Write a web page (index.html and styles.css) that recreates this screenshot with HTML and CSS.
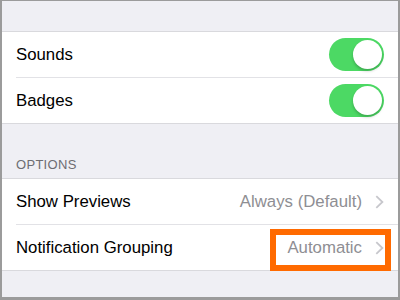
FILE: index.html
```html
<!DOCTYPE html>
<html lang="en">
<head>
    <meta charset="UTF-8">
    <meta name="viewport" content="width=device-width, initial-scale=1.0">
    <title>Notifications</title>
    <link rel="stylesheet" href="styles.css">
</head>
<body>

    <div class="frame">
        <div class="spacer"></div>

        <div class="group">
            <div class="row">
                <span class="label">Sounds</span>
                <span class="switch on"><span class="knob"></span></span>
            </div>
            <div class="row">
                <span class="label">Badges</span>
                <span class="switch on"><span class="knob"></span></span>
            </div>
        </div>

        <div class="section-header">OPTIONS</div>

        <div class="group">
            <div class="row">
                <span class="label">Show Previews</span>
                <span class="value">Always (Default)</span>
                <svg class="chevron" width="9" height="14" viewBox="0 0 9 14">
                    <path d="M1.3 1.2 L7.4 7 L1.3 12.8" fill="none" stroke="#c7c7cc" stroke-width="1.8"/>
                </svg>
            </div>
            <div class="row">
                <span class="label">Notification Grouping</span>
                <span class="value">Automatic</span>
                <svg class="chevron" width="9" height="14" viewBox="0 0 9 14">
                    <path d="M1.3 1.2 L7.4 7 L1.3 12.8" fill="none" stroke="#c7c7cc" stroke-width="1.8"/>
                </svg>
                <div class="highlight"></div>
            </div>
        </div>
    </div>

</body>
</html>
```

FILE: styles.css
```css
body {
    margin: 0;
    padding: 0;
    font-family: "Liberation Sans", Arial, sans-serif;
}

.frame {
    width: 396px;
    height: 296px;
    border-style: solid;
    border-color: #9b9b9b;
    border-width: 1px 2px 3px 2px;
    background-color: #efeff4;
    overflow: hidden;
}

.spacer {
    height: 30px;
}

.group {
    background-color: #fff;
    border-top: 1px solid #d9d9dd;
    border-bottom: 1px solid #d9d9dd;
}

.row {
    position: relative;
    display: flex;
    align-items: center;
    height: 45px;
    margin-left: 14px;
    padding-right: 14px;
    border-bottom: 1px solid #e2e2e6;
}

.row:last-child {
    border-bottom: none;
}

.label {
    flex: 1;
    font-size: 16.8px;
    color: #000;
}

.value {
    font-size: 16.8px;
    color: #8e8e93;
    margin-right: 13px;
}

.chevron {
    display: block;
}

.switch {
    position: relative;
    width: 55px;
    height: 33px;
    border-radius: 17px;
    background-color: #4cd964;
}

.switch .knob {
    position: absolute;
    top: 2px;
    right: 2px;
    width: 29px;
    height: 29px;
    border-radius: 50%;
    background-color: #fff;
    box-shadow: 0 2px 3px rgba(0, 0, 0, 0.22);
}

.section-header {
    height: 54px;
    box-sizing: border-box;
    display: flex;
    align-items: flex-end;
    padding: 0 14px 6px;
    font-size: 13px;
    line-height: 15px;
    color: #6d6d72;
    letter-spacing: 0.3px;
}

.highlight {
    position: absolute;
    top: 4px;
    right: 7px;
    width: 109px;
    height: 30px;
    border: 6px solid #ff6a00;
}
```
